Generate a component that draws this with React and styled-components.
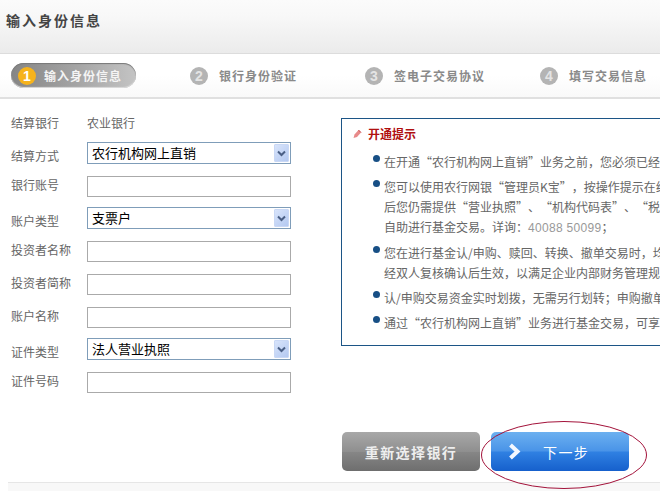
import React from "react";
import styled, { createGlobalStyle } from "styled-components";

const FONT = `"Noto Sans CJK SC", "Liberation Sans", sans-serif`;
const LATIN = `"Liberation Sans", sans-serif`;

const Global = createGlobalStyle`
  html, body { margin: 0; padding: 0; background: #fff; overflow: hidden; }
  body { font-family: ${FONT}; font-size: 12px; color: #666; text-spacing-trim: space-all; }
  * { box-sizing: border-box; }
`;

const Page = styled.div`
  width: 660px;
  height: 491px;
  overflow: hidden;
  position: relative;
  background: #fff;
  display: flex;
  flex-direction: column;
`;

const Header = styled.header`
  height: 54px;
  flex: none;
  padding: 11px 0 0 6px;
  background: linear-gradient(#fbfbfb, #f8f8f8 30%, #ebebeb);
  border-bottom: 1px solid #dcdcdc;
`;

const Title = styled.h1`
  margin: 0;
  font-size: 14px;
  line-height: 18px;
  font-weight: 700;
  letter-spacing: 2px;
  color: #444;
`;

const Steps = styled.nav`
  height: 45px;
  flex: none;
  display: flex;
  align-items: center;
  padding-left: 11px;
  background: linear-gradient(#fff, #fff 50%, #f9f9f9);
  border-bottom: 2px solid #e0e0e0;
`;

const ActivePill = styled.div`
  width: 125px;
  height: 25px;
  flex: none;
  margin-right: 54px;
  padding-left: 7px;
  display: flex;
  align-items: center;
  gap: 8px;
  border-radius: 13px;
  background: linear-gradient(90deg, #858585, #a6a6a6 55%, #c4c4c4);
  box-shadow: inset 0 1px 1px #777, inset 0 -1px 1px #ddd;
`;

const Step = styled.div`
  width: 175px;
  flex: none;
  display: flex;
  align-items: center;
  gap: 11px;
`;

const StepNum = styled.span`
  width: 18px;
  height: 18px;
  flex: none;
  border-radius: 50%;
  display: flex;
  align-items: center;
  justify-content: center;
  font-family: ${LATIN};
  font-size: 14px;
  font-weight: 700;
  color: ${(p) => (p.$active ? "#fff" : "#e4e4e4")};
  background: ${(p) => (p.$active ? "#f6b31c" : "#b4b4b4")};
`;

const StepLabel = styled.span`
  font-size: 12px;
  font-weight: 700;
  letter-spacing: 1px;
  white-space: nowrap;
  color: ${(p) => (p.$active ? "#f4f4f4" : "#8a8a8a")};
`;

const Main = styled.main`
  display: flex;
  align-items: flex-start;
  flex: none;
  height: 333px;
`;

const Form = styled.div`
  width: 341px;
  flex: none;
  padding: 15px 0 0 11px;
  display: flex;
  flex-direction: column;
`;

const Row = styled.div`
  display: flex;
  align-items: center;
  height: ${(p) => p.$height}px;
  margin-top: ${(p) => p.$top || 0}px;
`;

const Label = styled.span`
  width: 76px;
  flex: none;
  font-size: 12px;
  line-height: 16px;
  color: #666;
  white-space: nowrap;
  margin-top: ${(p) => (p.$select ? 6 : 0)}px;
  margin-bottom: ${(p) => (p.$input ? 3 : 0)}px;
`;

const Value = styled.span`
  font-size: 12px;
  line-height: 18px;
  color: #666;
`;

const TextInput = styled.input`
  width: 204px;
  height: 21px;
  padding: 0 4px;
  border: 1px solid #aaa;
  background: #fff;
  outline: none;
  display: block;
`;

const SelectBox = styled.div`
  width: 204px;
  height: 22px;
  border: 1px solid #7f9db9;
  background: #fff;
  display: flex;
  align-items: center;
  justify-content: space-between;
  padding: 0 1px 0 4px;
  font-size: 13px;
  color: #000;
`;

const SelectText = styled.span`
  line-height: 18px;
`;

const SelectArrow = styled.span`
  width: 15px;
  height: 18px;
  flex: none;
  display: flex;
  align-items: center;
  justify-content: center;
  border-radius: 1px;
  background: linear-gradient(135deg, #d8e4fb, #b4c9f1);
  border: 1px solid #c9d8f5;
`;

const Panel = styled.aside`
  width: 380px;
  height: 228px;
  margin-top: 19px;
  flex: none;
  border: 1px solid #1c5586;
  padding: 6px 0 0 11px;
  background: #fff;
`;

const PanelTitle = styled.h2`
  margin: 0;
  display: flex;
  align-items: center;
  gap: 6px;
  font-size: 12px;
  line-height: 18px;
  font-weight: 700;
  color: #b01010;
`;

const NoticeList = styled.ul`
  list-style: none;
  margin: 9px 0 0;
  padding: 0 0 0 20px;
  display: flex;
  flex-direction: column;
  gap: 5px;
`;

const NoticeItem = styled.li`
  position: relative;
  line-height: 20px;
  font-size: 12px;
  color: #666;
  white-space: nowrap;
  padding-left: 11px;
  &::before {
    content: "";
    position: absolute;
    left: 0;
    top: 3px;
    width: 7px;
    height: 7px;
    border-radius: 50%;
    background: #174f85;
  }
`;

const Phone = styled.span`
  font-family: ${LATIN};
  letter-spacing: 0.3px;
  color: #999;
`;

const Actions = styled.div`
  flex: none;
  height: 40px;
  padding-left: 342px;
  display: flex;
  gap: 11px;
`;

const Button = styled.button`
  width: 138px;
  height: 39px;
  border: 0;
  border-radius: 5px;
  display: flex;
  align-items: center;
  justify-content: ${(p) => (p.$primary ? "flex-start" : "center")};
  padding: ${(p) => (p.$primary ? "0 0 0 17px" : "0")};
  gap: 22px;
  font-family: ${FONT};
  font-size: 14px;
  font-weight: ${(p) => (p.$primary ? 400 : 700)};
  letter-spacing: 1.4px;
  color: ${(p) => (p.$primary ? "#fff" : "#eee")};
  background: ${(p) =>
    p.$primary
      ? "linear-gradient(#6cb0f0, #4a94e8 48%, #2f80e2 52%, #1660cc)"
      : "linear-gradient(#a8a8a8, #8f8f8f 50%, #868686 52%, #6e6e6e)"};
`;

const Footer = styled.footer`
  flex: none;
  margin: 10px 0 0 8px;
  height: 10px;
  background: #f8f8f8;
  border-top: 1px solid #e6e6e6;
`;

const Circle = styled.svg`
  position: absolute;
  left: 481px;
  top: 421px;
  pointer-events: none;
`;

function Select({ children }) {
  return (
    <SelectBox>
      <SelectText>{children}</SelectText>
      <SelectArrow>
        <svg width="9" height="7" viewBox="0 0 9 7">
          <path d="M1 1.5 L4.5 5 L8 1.5" fill="none" stroke="#4a5f85" strokeWidth="2" />
        </svg>
      </SelectArrow>
    </SelectBox>
  );
}

const Pencil = () => (
  <svg width="9" height="10" viewBox="0 0 9 10">
    <path d="M0.5 9 L1.5 5.5 L5.5 1 L8 3.5 L4 8 Z" fill="#e88a8a" />
    <path d="M5.5 1 L8 3.5" stroke="#c04040" strokeWidth="1" />
  </svg>
);

const Chevron = () => (
  <svg width="13" height="17" viewBox="0 0 13 17">
    <path d="M2.5 2 L9.5 8.5 L2.5 15" fill="none" stroke="#f4f8ff" strokeWidth="4" />
  </svg>
);

export default function App() {
  return (
    <Page>
      <Global />
      <Header>
        <Title>输入身份信息</Title>
      </Header>
      <Steps>
        <ActivePill>
          <StepNum $active>1</StepNum>
          <StepLabel $active>输入身份信息</StepLabel>
        </ActivePill>
        <Step>
          <StepNum>2</StepNum>
          <StepLabel>银行身份验证</StepLabel>
        </Step>
        <Step>
          <StepNum>3</StepNum>
          <StepLabel>签电子交易协议</StepLabel>
        </Step>
        <Step>
          <StepNum>4</StepNum>
          <StepLabel>填写交易信息</StepLabel>
        </Step>
      </Steps>
      <Main>
        <Form>
          <Row $height={18}>
            <Label>结算银行</Label>
            <Value>农业银行</Value>
          </Row>
          <Row $height={22} $top={10}>
            <Label $select>结算方式</Label>
            <Select>农行机构网上直销</Select>
          </Row>
          <Row $height={21} $top={12}>
            <Label $input>银行账号</Label>
            <TextInput />
          </Row>
          <Row $height={22} $top={10}>
            <Label $select>账户类型</Label>
            <Select>支票户</Select>
          </Row>
          <Row $height={21} $top={12}>
            <Label $input>投资者名称</Label>
            <TextInput />
          </Row>
          <Row $height={21} $top={12}>
            <Label $input>投资者简称</Label>
            <TextInput />
          </Row>
          <Row $height={21} $top={12}>
            <Label $input>账户名称</Label>
            <TextInput />
          </Row>
          <Row $height={22} $top={10}>
            <Label $select>证件类型</Label>
            <Select>法人营业执照</Select>
          </Row>
          <Row $height={21} $top={12}>
            <Label $input>证件号码</Label>
            <TextInput />
          </Row>
        </Form>
        <Panel>
          <PanelTitle>
            <Pencil />
            开通提示
          </PanelTitle>
          <NoticeList>
            <NoticeItem>在开通“农行机构网上直销”业务之前，您必须已经</NoticeItem>
            <NoticeItem>
              您可以使用农行网银“管理员K宝”，按操作提示在线
              <br />
              后您仍需提供“营业执照”、“机构代码表”、“税
              <br />
              自助进行基金交易。详询：<Phone>40088 50099</Phone>；
            </NoticeItem>
            <NoticeItem>
              您在进行基金认/申购、赎回、转换、撤单交易时，均
              <br />
              经双人复核确认后生效，以满足企业内部财务管理规
            </NoticeItem>
            <NoticeItem>认/申购交易资金实时划拨，无需另行划转；申购撤单</NoticeItem>
            <NoticeItem>通过“农行机构网上直销”业务进行基金交易，可享</NoticeItem>
          </NoticeList>
        </Panel>
      </Main>
      <Actions>
        <Button>重新选择银行</Button>
        <Button $primary>
          <Chevron />
          下一步
        </Button>
      </Actions>
      <Footer />
      <Circle width="167" height="69" viewBox="0 0 167 69">
        <ellipse cx="83" cy="34" rx="82.5" ry="33.5" fill="none" stroke="#a3123a" strokeWidth="1" />
      </Circle>
    </Page>
  );
}
